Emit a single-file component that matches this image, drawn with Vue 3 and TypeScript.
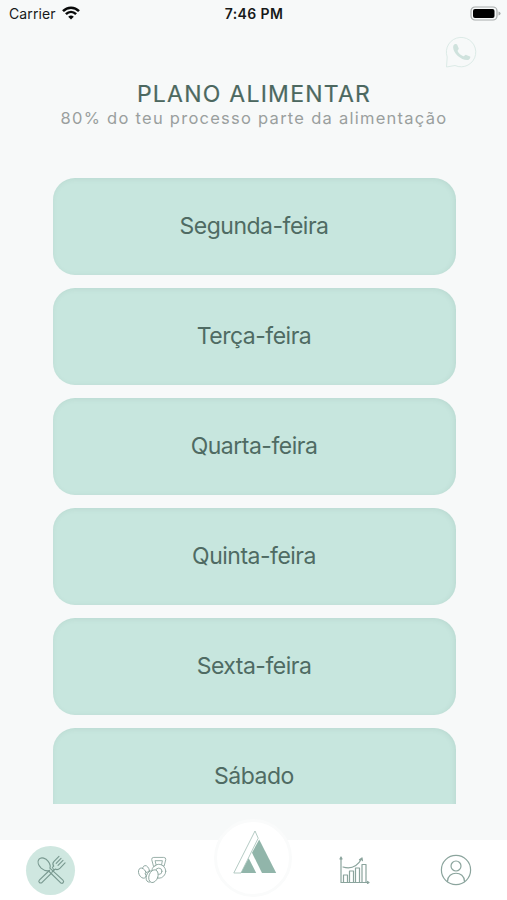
<script setup lang="ts">
const days: string[] = [
  'Segunda-feira',
  'Terça-feira',
  'Quarta-feira',
  'Quinta-feira',
  'Sexta-feira',
  'Sábado',
]
</script>

<template>
  <div class="screen">
    <div class="status">
      <div class="carrier">
        <span>Carrier</span>
        <svg class="wifi" viewBox="0 0 18 14">
          <path d="M1 5.200C5.500.6 12.500.6 17 5.200" />
          <path d="M3.900 8.100C6.900 5.200 11.100 5.200 14.100 8.100" />
          <path class="solid" d="M6.200 10.700Q9 8.300 11.800 10.700L9 13.600Z" />
        </svg>
      </div>
      <span class="time">7:46 PM</span>
      <svg class="battery" viewBox="0 0 32 16">
        <rect class="case" x="1" y="1" width="26" height="13" rx="4" />
        <rect class="level" x="3" y="3" width="21.500" height="9" rx="2" />
        <path class="tip" d="M28.500 5.500Q30.600 6 30.600 7.500T28.500 9.500Z" />
      </svg>
    </div>

    <header class="header">
      <svg class="whatsapp" viewBox="0 0 32 32">
        <path class="bubble" d="M1.500 31L2.200 21A14.700 14.700 0 1 1 10 29.500Z" />
        <path
          class="phone"
          d="M9.200 8.500C11 7.600 12 8.100 12.500 9.500L13.700 12.300C14.100 13.400 12.300 14.300 12.600 15.100C13.700 17.600 15.800 19.500 18.300 20.200C19.300 20.400 20.200 18.500 21.300 18.900L25 20.500C26 21.200 24.600 23.800 22.500 24.100C16.500 24.500 8.200 17.200 8.100 11.200Q8.200 9.300 9.200 8.500Z"
        />
      </svg>
      <h1>PLANO ALIMENTAR</h1>
      <p>80% do teu processo parte da alimentação</p>
    </header>

    <main class="days">
      <button v-for="day in days" :key="day" class="day" type="button">{{ day }}</button>
    </main>

    <nav class="tabs">
      <div class="tab">
        <span class="active">
          <svg class="icon food" viewBox="0 0 32 32">
            <path d="M13.200 16.800C11 17.200 8.500 16.500 5.500 14C2.500 11 1.200 7 3.200 4.500C5.800 1.700 10.500 3.500 13 6.800C15 9.500 15.700 12 14.800 14L28.700 26.800Q30.200 28.300 28.900 29.600T26.100 29.400Z" />
            <path d="M16.800 19.100L6.500 29.300Q4.700 30.500 3.500 29.200T3.800 26.500L14.500 16.300M17.500 13.300L18.900 11.900Q17 9.200 19 7L24.500 1.500M17.300 17.900L20.500 15Q23 16.500 25.700 14L31 8.500M26.700 3.600L21.500 8.900M28.800 5.800L23.500 11.100M18 14.500L19.700 16" />
          </svg>
        </span>
      </div>
      <div class="tab">
        <svg class="icon weights" viewBox="0 0 32 28">
          <circle cx="22.500" cy="15.300" r="7.200" />
          <circle cx="22.500" cy="15.300" r="3.300" />
          <path class="front" d="M17 10L15.200 3.300Q15 1 17.300 1H27.500Q30 1 29.700 3.300L28 10L25.300 8.800L26.200 4.400H18.700L19.700 8.800Z" />
          <ellipse class="front" cx="9.200" cy="15.200" rx="3.700" ry="5.800" transform="rotate(-10 9.200 15.200)" />
          <ellipse class="front" cx="5.600" cy="17.200" rx="3.700" ry="5.500" transform="rotate(-25 5.600 17.200)" />
          <path class="front" d="M8.500 17.500L13 14.800L15.500 18.500L11 21.200Z" />
          <ellipse class="front" cx="13.600" cy="20.700" rx="3.900" ry="6" transform="rotate(20 13.600 20.700)" />
          <ellipse class="front" cx="17" cy="20.400" rx="4.600" ry="6.800" transform="rotate(20 17 20.400)" />
        </svg>
      </div>
      <div class="tab center">
        <span class="logo-disc">
          <svg class="logo" viewBox="0 0 44 44">
            <path class="outline" d="M.8 43L22 1L25.200 8.200L8 43Z" />
            <path class="fill" d="M26.200 9.500L43.200 43H29L19 22.800Z" />
            <path class="fill" d="M15.700 28.200L23.200 43H8Z" />
          </svg>
        </span>
      </div>
      <div class="tab">
        <svg class="icon chart" viewBox="0 0 32 28">
          <path d="M2 1V26.500H30M1 3L2 1L3 3M28.500 25.500L30 26.500L28.500 27.500" />
          <path d="M4.500 26V19H8.500V26M10.500 26V15H14.500V26M16.500 26V12H20.500V26M23 26V8.500H27V26" />
          <path d="M4 11Q16 14.500 22.500 3M20.500 3.800L23 1.900L23.400 4.700" />
        </svg>
      </div>
      <div class="tab">
        <svg class="icon profile" viewBox="0 0 32 32">
          <circle cx="16" cy="16" r="14.600" />
          <circle cx="16" cy="12" r="5" />
          <path d="M7.500 27.500C7.500 16.500 24.500 16.500 24.500 27.500" />
        </svg>
      </div>
    </nav>
  </div>
</template>

<style>
body {
  margin: 0;
  background: #f7f9f9;
}
</style>

<style scoped>
.screen {
  display: flex;
  flex-direction: column;
  box-sizing: border-box;
  width: 507px;
  height: 900px;
  overflow: hidden;
  background: #f7f9f9;
  font-family: Inter, 'Liberation Sans', sans-serif;
}

svg {
  display: block;
  flex: none;
  fill: none;
}

.status {
  display: grid;
  grid-template-columns: 1fr auto 1fr;
  align-items: center;
  height: 28px;
  padding: 0 5px 0 9px;
  color: #171919;
  font-size: 14px;
  line-height: 28px;
}

.carrier {
  display: flex;
  align-items: center;
  gap: 6px;
}

.carrier span {
  letter-spacing: 0.100px;
}

.wifi {
  width: 18px;
  height: 14px;
  margin-top: -2px;
  stroke: #080909;
  stroke-width: 2.500;
}

.wifi .solid {
  fill: #080909;
  stroke: none;
}

.time {
  margin-right: 3px;
  font-weight: 600;
  font-size: 14px;
  letter-spacing: 0.400px;
}

.battery {
  justify-self: end;
  width: 32px;
  height: 16px;
}

.case {
  stroke: #a8abab;
  stroke-width: 1.200;
}

.level {
  fill: #000;
}

.tip {
  fill: #a8abab;
}

.header {
  display: flex;
  flex-direction: column;
  align-items: center;
  height: 149.500px;
  flex: none;
}

.whatsapp {
  align-self: flex-end;
  width: 32px;
  height: 32px;
  margin: 8px 30px 0 0;
}

.bubble {
  stroke: #dcebe7;
  stroke-width: 1;
}

.phone {
  fill: #cfe2dd;
}

h1 {
  margin: 13px 0 0;
  padding-left: 1px;
  color: #4c6860;
  font-size: 23px;
  font-weight: 400;
  line-height: 26px;
  letter-spacing: 1.250px;
  -webkit-text-stroke: 0.200px #4c6860;
}

p {
  margin: 0;
  padding-left: 1px;
  color: #9a9f9e;
  font-size: 16.500px;
  line-height: 22px;
  letter-spacing: 1.260px;
  white-space: nowrap;
}

.days {
  display: flex;
  flex-direction: column;
  gap: 12.500px;
  height: 626px;
  flex: none;
  padding: 0 51.500px 0 52.500px;
  overflow: hidden;
}

.day {
  flex: none;
  height: 97.500px;
  padding: 0;
  border: 0;
  border-radius: 22px;
  background: #c7e6de;
  box-shadow: inset -1px 1px 5px rgba(92, 135, 122, 0.130);
  color: #4f6b63;
  font: inherit;
  font-size: 23px;
  line-height: 28px;
  letter-spacing: -0.500px;
}

.tabs {
  display: grid;
  grid-template-columns: repeat(5, 1fr);
  align-items: center;
  height: 60px;
  margin-top: auto;
  background: #fff;
}

.tab {
  display: flex;
  align-items: center;
  justify-content: center;
}

.active {
  display: flex;
  align-items: center;
  justify-content: center;
  width: 49px;
  height: 49px;
  border-radius: 50%;
  background: #cfe7e0;
}

.icon {
  stroke: #8ba49d;
  stroke-width: 1.200;
  stroke-linecap: round;
  stroke-linejoin: round;
}

.food {
  width: 30px;
  height: 30px;
  stroke: #78988f;
}

.weights {
  width: 31px;
  height: 28px;
  stroke-width: 0.900;
}

.front {
  fill: #fff;
}

.chart {
  width: 32px;
  height: 28px;
}

.profile {
  width: 32px;
  height: 32px;
}

.center {
  align-self: end;
}

.logo-disc {
  display: flex;
  align-items: flex-start;
  justify-content: center;
  box-sizing: border-box;
  width: 78px;
  height: 78px;
  margin: -21px 0 3px;
  padding: 8px 0 0 3px;
  border: 3px solid #fafbfb;
  border-radius: 50%;
  background: #fff;
}

.logo {
  width: 44px;
  height: 44px;
}

.outline {
  stroke: #a2beb5;
  stroke-width: 0.800;
}

.fill {
  fill: #91b5aa;
}
</style>
